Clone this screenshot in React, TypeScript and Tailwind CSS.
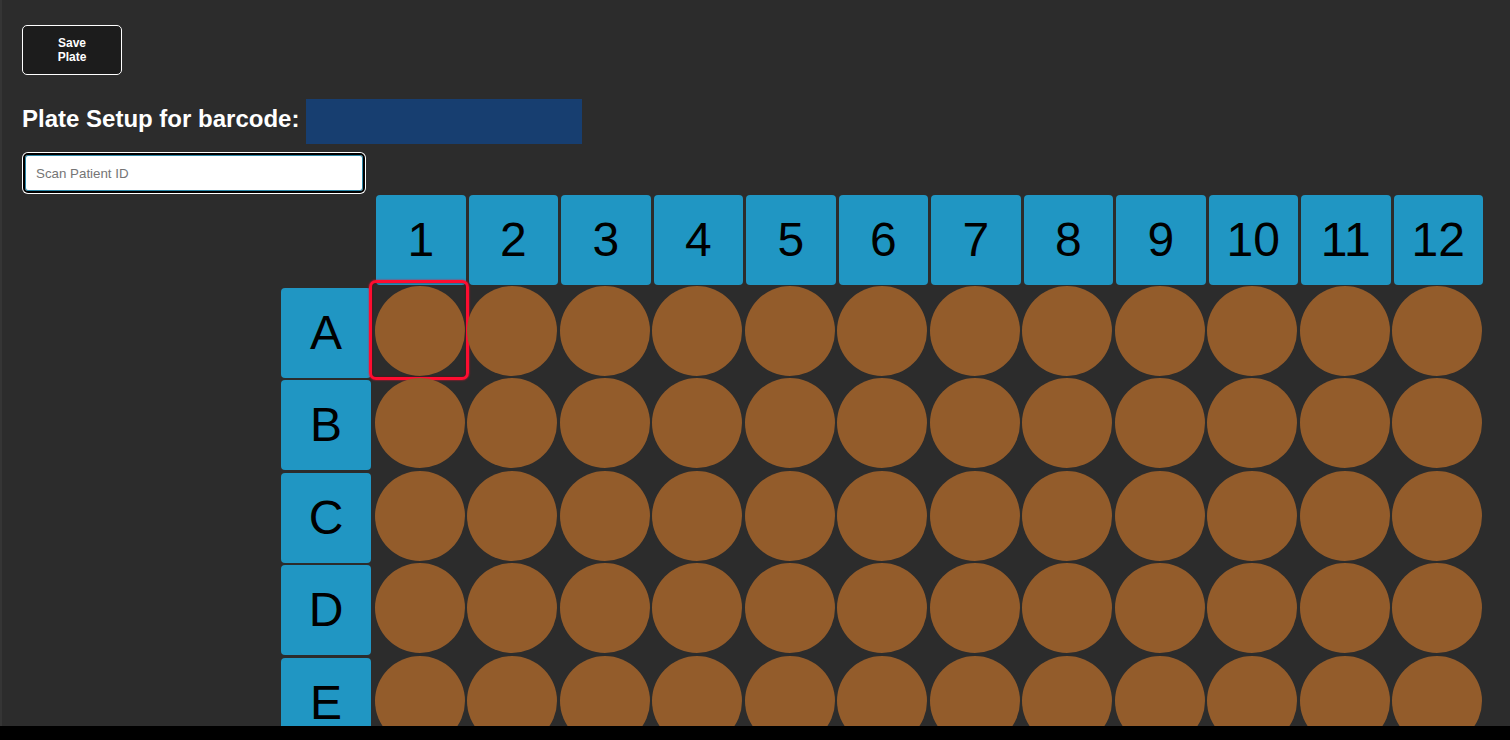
import React from "react";

const COLS = Array.from({ length: 12 }, (_, i) => i + 1);
const ROWS = ["A", "B", "C", "D", "E"];

function ColumnHeader({ n }: { n: number }) {
  return (
    <div className="mt-[2px] ml-[2.5px] flex h-[89.5px] w-[89.5px] items-center justify-center rounded-[4px] bg-[#2096c3] text-[48px] leading-none text-black">
      {n}
    </div>
  );
}

function RowHeader({ label }: { label: string }) {
  return (
    <div className="mt-[2px] flex h-[90px] w-[90px] items-center justify-center rounded-[4px] bg-[#2096c3] text-[48px] leading-none text-black">
      {label}
    </div>
  );
}

function Well({ selected }: { selected: boolean }) {
  return (
    <div className="relative ml-[1.2px] h-[90px] w-[90px]">
      <div className="h-full w-full rounded-full bg-[#935c2b]" />
      {selected && (
        <div className="pointer-events-none absolute left-[-5.5px] top-[-5.5px] h-[100px] w-[100px] rounded-[7px] border-[3.5px] border-[#ff0d30] shadow-[0_0_2px_#ff0d30,inset_0_0_2px_#6a0010]" />
      )}
    </div>
  );
}

export default function App() {
  return (
    <div
      className="flex h-[740px] w-[1510px] flex-col bg-black"
      style={{ fontFamily: '"Liberation Sans", Arial, sans-serif' }}
    >
      <main className="h-[726px] overflow-hidden border-l-2 border-[#353535] bg-[#2c2c2c] pl-[20px] pt-[25px]">
        <button className="flex h-[50px] w-[100px] flex-col items-center justify-center rounded-[5px] border border-white bg-[#1c1c1c] text-[12px] font-semibold leading-[14px] text-white">
          <span>Save</span>
          <span>Plate</span>
        </button>

        <div className="mt-[24px] flex h-[45px] items-start">
          <h1 className="mt-[6px] text-[24px] font-bold leading-[27.6px] text-white">
            Plate Setup for barcode:
          </h1>
          <div className="ml-[7px] h-[45px] w-[276px] bg-[#173e70]" />
        </div>

        <input
          type="text"
          placeholder="Scan Patient ID"
          className="mt-[9px] ml-[1px] block h-[40px] w-[342px] rounded-[5px] border-2 border-black bg-white px-[11px] text-[13.33px] text-black shadow-[inset_0_0_0_1px_#2b86a6] outline-none ring-1 ring-white placeholder:text-[#757575]"
        />

        <div className="ml-[259px] grid grid-cols-[repeat(13,92.5px)] auto-rows-[92.5px]">
          <div />
          {COLS.map((n) => (
            <ColumnHeader key={n} n={n} />
          ))}
          {ROWS.map((r, ri) => (
            <React.Fragment key={r}>
              <RowHeader label={r} />
              {COLS.map((c) => (
                <Well key={c} selected={ri === 0 && c === 1} />
              ))}
            </React.Fragment>
          ))}
        </div>
      </main>
    </div>
  );
}
